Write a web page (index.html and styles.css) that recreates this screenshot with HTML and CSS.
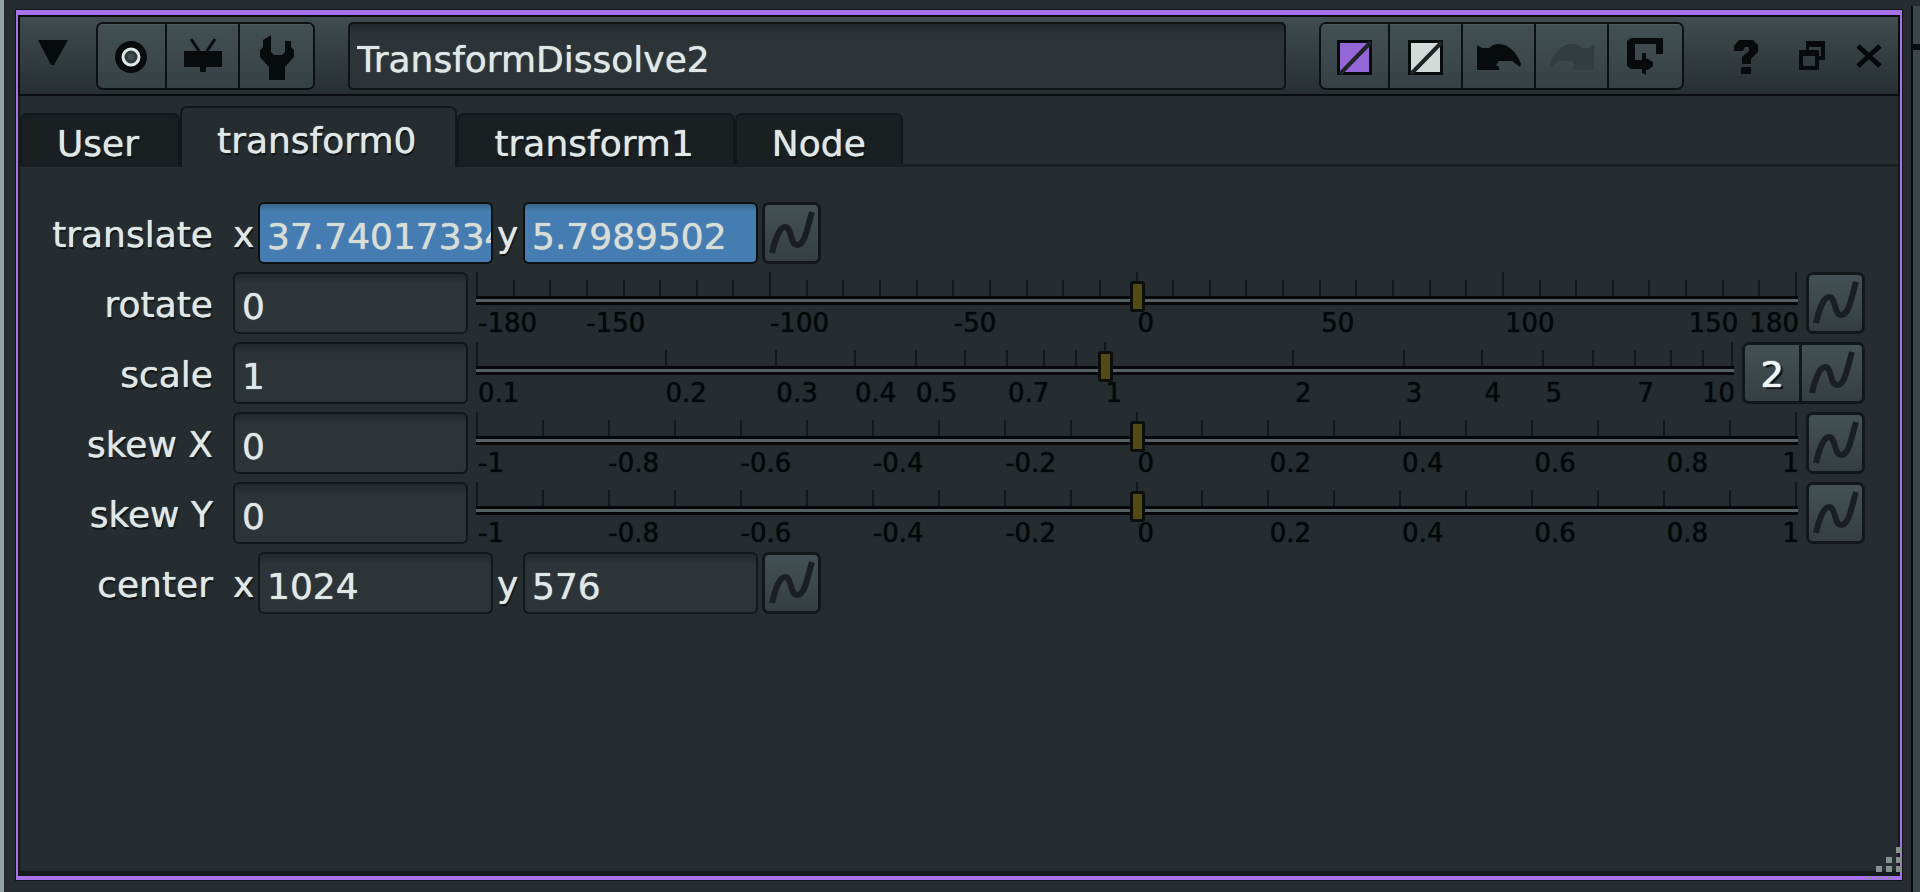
FILE: index.html
```html
<!DOCTYPE html>
<html lang="en">
<head>
    <meta charset="UTF-8">
    <meta name="viewport" content="width=device-width, initial-scale=1.0">
    <title>TransformDissolve2</title>
    <link rel="stylesheet" href="styles.css">
</head>
<body>
    <!-- Curve icon shared by all animation buttons -->
    <svg class="sprite" aria-hidden="true">
        <symbol id="curve" viewBox="0 0 46 52">
            <path d="M3 46 C5 36 10 20 16 20 C23 20 21 38 28 38 C36 38 38 22 43 5"/>
        </symbol>
    </svg>

    <main class="panel">
        <header class="header">
            <button class="collapse" aria-label="Collapse">
                <svg width="30" height="26" viewBox="0 0 30 26"><path d="M0 0 H30 L16 25 H13 Z"/></svg>
            </button>
            <div class="group">
                <button aria-label="Center node">
                    <svg width="34" height="34" viewBox="0 0 34 34">
                        <circle cx="16" cy="17" r="16"/>
                        <circle class="ring" cx="16" cy="17" r="8"/>
                        <circle class="pupil" cx="16" cy="17" r="3"/>
                    </svg>
                </button>
                <button aria-label="Show in viewer">
                    <svg width="40" height="48" viewBox="0 0 40 48">
                        <path d="M1 18 H39 V34 H23 V39 H17 V34 H1 Z"/>
                        <path class="stroke" d="M8 6 L16 18 M32 6 L24 18"/>
                    </svg>
                </button>
                <button aria-label="Knob settings">
                    <svg width="36" height="48" viewBox="0 0 36 48">
                        <path d="M9 4 L12 2 V19 L15 22 H23 L26 19 V8 H32 V14 L35 17 V24 L26 34 V47 H10 V34 L1 24 V17 L4 14 V7 Z"/>
                    </svg>
                </button>
            </div>
            <input class="node-name" type="text" value="TransformDissolve2" aria-label="Node name">
            <div class="group">
                <button aria-label="Node color">
                    <svg width="36" height="36" viewBox="0 0 36 36">
                        <rect x="0" y="1" width="35" height="35"/>
                        <rect class="purple" x="3" y="4" width="29" height="29"/>
                        <path class="slash" d="M3 35 L34 3"/>
                    </svg>
                </button>
                <button aria-label="Interface color">
                    <svg width="36" height="36" viewBox="0 0 36 36">
                        <rect x="0" y="1" width="35" height="35"/>
                        <rect class="white" x="3" y="4" width="29" height="29"/>
                        <path class="slash" d="M3 35 L34 3"/>
                    </svg>
                </button>
                <button aria-label="Undo">
                    <svg width="46" height="28" viewBox="0 0 46 28">
                        <path d="M1 2 L6 5 H13 Q17 1 23 1 C33 1 41 10 45 21 L44 24 L36 18 H23 L20 22 L23 24 V27 H1 Z"/>
                    </svg>
                </button>
                <button aria-label="Redo" disabled>
                    <svg width="46" height="28" viewBox="0 0 46 28">
                        <path d="M45 2 L40 5 H33 Q29 1 23 1 C13 1 5 10 1 21 L2 24 L10 18 H23 L26 22 L23 24 V27 H45 Z"/>
                    </svg>
                </button>
                <button aria-label="Revert">
                    <svg width="40" height="44" viewBox="0 0 40 44">
                        <path d="M5 3 H37 V19 H30 V9 H9 V25 H16 V18 H20 V23 L27 27 V31 L22 35 H20 V40 L16 38 V34 H5 L1 31 V6 Z"/>
                    </svg>
                </button>
            </div>
            <div class="window-buttons">
                <button aria-label="Help">
                    <svg width="26" height="40" viewBox="0 0 26 40">
                        <path d="M6 4 H20 L25 9 V16 L18 23 V28 H9 V21 L16 15 V11 H12 L10 15 H1 V10 Z M8 31 H18 V38 H8 Z"/>
                    </svg>
                </button>
                <button aria-label="Float window">
                    <svg width="36" height="36" viewBox="0 0 36 36">
                        <path d="M16 3 H35 V22 H29 V18 H31 V9 H19 V12 H16 Z"/>
                        <path fill-rule="evenodd" d="M9 12 H29 V32 H9 Z M13 18 V28 H25 V18 Z"/>
                    </svg>
                </button>
                <button aria-label="Close">
                    <svg width="28" height="28" viewBox="0 0 28 28">
                        <path class="cross" d="M2 4 L24 24 M24 4 L2 24"/>
                    </svg>
                </button>
            </div>
        </header>

        <div class="tabs" role="tablist">
            <button class="tab" role="tab">User</button>
            <button class="tab active" role="tab" aria-selected="true">transform0</button>
            <button class="tab" role="tab">transform1</button>
            <button class="tab" role="tab">Node</button>
        </div>

        <section class="knobs">
            <div class="row">
                <span class="name">translate</span>
                <label class="axis" for="translateX">x</label>
                <input class="field animated" type="text" id="translateX" value="37.74017334">
                <label class="axis axis-y" for="translateY">y</label>
                <input class="field animated" type="text" id="translateY" value="5.7989502">
                <button class="curve" aria-label="Animation"><svg><use href="#curve"/></svg></button>
            </div>
            <div class="row">
                <label class="name" for="rotate">rotate</label>
                <input class="field" type="text" id="rotate" value="0">
                <div class="slider" data-scale="rotate">
                    <div class="ticks"></div>
                    <input type="range" min="-180" max="180" value="0" aria-label="rotate">
                    <div class="numbers"></div>
                </div>
                <button class="curve" aria-label="Animation"><svg><use href="#curve"/></svg></button>
            </div>
            <div class="row">
                <label class="name" for="scale">scale</label>
                <input class="field" type="text" id="scale" value="1">
                <div class="slider" data-scale="scale">
                    <div class="ticks"></div>
                    <input type="range" min="-1" max="1" step="0.01" value="0" aria-label="scale">
                    <div class="numbers"></div>
                </div>
                <div class="pair">
                    <button class="curve split">2</button>
                    <button class="curve" aria-label="Animation"><svg><use href="#curve"/></svg></button>
                </div>
            </div>
            <div class="row">
                <label class="name" for="skewX">skew X</label>
                <input class="field" type="text" id="skewX" value="0">
                <div class="slider" data-scale="skew">
                    <div class="ticks"></div>
                    <input type="range" min="-1" max="1" step="0.01" value="0" aria-label="skew X">
                    <div class="numbers"></div>
                </div>
                <button class="curve" aria-label="Animation"><svg><use href="#curve"/></svg></button>
            </div>
            <div class="row">
                <label class="name" for="skewY">skew Y</label>
                <input class="field" type="text" id="skewY" value="0">
                <div class="slider" data-scale="skew">
                    <div class="ticks"></div>
                    <input type="range" min="-1" max="1" step="0.01" value="0" aria-label="skew Y">
                    <div class="numbers"></div>
                </div>
                <button class="curve" aria-label="Animation"><svg><use href="#curve"/></svg></button>
            </div>
            <div class="row">
                <span class="name">center</span>
                <label class="axis" for="centerX">x</label>
                <input class="field" type="text" id="centerX" value="1024">
                <label class="axis axis-y" for="centerY">y</label>
                <input class="field" type="text" id="centerY" value="576">
                <button class="curve" aria-label="Animation"><svg><use href="#curve"/></svg></button>
            </div>
        </section>

        <svg class="grip" width="36" height="34" viewBox="0 0 36 34">
            <path d="M29 1h5v6h-5z M19 11h6v6h-6z M29 11h5v6h-5z M9 20h6v6h-6z M19 20h6v6h-6z M29 20h5v6h-5z M1 31h4v2h-4z M11 31h4v2h-4z M20 31h4v2h-4z"/>
        </svg>
    </main>
    <aside class="gutter"></aside>

    <script>
        const range = (from, to, step) => {
            const values = [];
            for (let i = 0; i <= Math.round((to - from) / step); i++) {
                values.push(Math.round((from + i * step) * 10) / 10);
            }
            return values;
        };

        const scales = {
            rotate: {
                ticks: range(-180, 180, 10),
                long: [-180, -100, 0, 100, 180],
                numbers: [-180, -150, -100, -50, 0, 50, 100, 150, 180],
                position: v => (v + 180) / 360
            },
            scale: {
                ticks: range(0.1, 1, 0.1).concat(range(2, 10, 1)),
                long: [0.1, 1, 10],
                numbers: [0.1, 0.2, 0.3, 0.4, 0.5, 0.7, 1, 2, 3, 4, 5, 7, 10],
                position: v => (Math.log10(v) + 1) / 2
            },
            skew: {
                ticks: range(-1, 1, 0.1),
                long: [-1, 0, 1],
                numbers: range(-1, 1, 0.2),
                position: v => (v + 1) / 2
            }
        };

        document.querySelectorAll('.slider').forEach(slider => {
            const scale = scales[slider.dataset.scale];
            const ticks = slider.querySelector('.ticks');
            const numbers = slider.querySelector('.numbers');

            scale.ticks.forEach(value => {
                const tick = document.createElement('i');
                tick.style.left = `${scale.position(value) * 100}%`;
                tick.classList.toggle('long', scale.long.includes(value));
                ticks.appendChild(tick);
            });

            // The last number is kept inside the end of the track
            scale.numbers.forEach((value, index) => {
                const number = document.createElement('span');
                number.textContent = value;
                if (index === scale.numbers.length - 1) {
                    number.style.right = '0';
                } else {
                    number.style.left = `${scale.position(value) * 100}%`;
                }
                numbers.appendChild(number);
            });
        });
    </script>
</body>
</html>
```
FILE: styles.css
```css
* {
    box-sizing: border-box;
}

body {
    margin: 0;
    min-height: 100vh;
    display: flex;
    background-color: #252d30;
    border-left: 4px solid #93a3a1;
    color: #dfe8e6;
    font-family: "DejaVu Sans", Verdana, sans-serif;
    font-size: 36px;
    line-height: 42px;
}

button,
input {
    margin: 0;
    padding: 0;
    border: 0;
    background: none;
    color: inherit;
    font: inherit;
    outline: none;
}

button {
    display: flex;
    align-items: center;
    justify-content: center;
}

svg {
    display: block;
    fill: #080b0c;
}

.sprite {
    position: absolute;
    width: 0;
    height: 0;
}

.panel {
    position: relative;
    flex: 1;
    min-width: 0;
    margin: 10px 9px 12px 12px;
    border: solid #a873ea;
    border-width: 5px 2px 4px;
    box-shadow: 0 0 0 1px #0f1415, inset 2px -5px 1px #141a1c, inset -2px 0 1px #141a1c;
}

.gutter {
    width: 9px;
    margin-top: 6px;
    border-left: 2px solid #0a0d0e;
    background: linear-gradient(#3b4749 38px, #0a0d0e 38px, #0a0d0e 44px, #3b4749 44px);
}

/* Header */

.header {
    display: flex;
    align-items: center;
    height: 81px;
    padding-right: 3px;
    border: 2px solid #0a0d0e;
    background: linear-gradient(#404c4f, #272f32);
}

.collapse {
    width: 65px;
    height: 68px;
    margin-right: 11px;
    padding-bottom: 6px;
}

.group {
    display: flex;
    height: 68px;
    border: 2px solid #0c1011;
    border-radius: 7px;
    overflow: hidden;
}

.group button {
    width: 73px;
    padding-top: 2px;
    background: linear-gradient(#435053, #364144);
    box-shadow: inset 0 1px #4c595b;
}

.group button:first-child {
    width: 67px;
}

.group button:last-child {
    width: 75px;
}

.group button + button {
    border-left: 2px solid #0c1011;
}

.group button:disabled svg {
    fill: #333d3f;
}

.ring {
    fill: #313b3d;
    stroke: #dfe8e6;
    stroke-width: 3;
}

.stroke {
    fill: none;
    stroke: #080b0c;
    stroke-width: 3;
}

.pupil {
    fill: #435053;
}

.purple {
    fill: #9566d8;
}

.white {
    fill: #d3dad8;
}

.slash {
    stroke: #1d2426;
    stroke-width: 4;
}

.cross {
    stroke: #050808;
    stroke-width: 5;
}

.node-name {
    flex: 1;
    min-width: 0;
    height: 68px;
    margin: 0 33px;
    padding: 8px 7px 0;
    border: 2px solid #0f1415;
    border-radius: 5px;
    background: linear-gradient(#21282b, #2c3437 10px);
    text-shadow: 0 0 1px #dfe8e6;
}

.window-buttons {
    display: flex;
    gap: 12px;
    padding-left: 37px;
}

.window-buttons button {
    width: 50px;
    height: 68px;
}

/* Tabs */

.tabs {
    display: flex;
    align-items: flex-end;
    height: 71px;
    margin: 0 2px;
    border-bottom: 3px solid #1a2022;
}

.tab {
    height: 51px;
    padding: 8px 39px 0 35px;
    border: 2px solid #12181a;
    border-bottom: 0;
    border-radius: 7px 7px 0 0;
    background-color: #1a2022;
    text-shadow: 0 0 1px #dfe8e6, 1px 2px 1px #0a0d0e;
}

.tab.active {
    height: 61px;
    margin-bottom: -3px;
    padding-top: 6px;
    background-color: #252d30;
}

.tab:last-child {
    padding-right: 35px;
}

/* Knobs */

.knobs {
    display: flex;
    flex-direction: column;
    gap: 8px;
    padding: 35px 35px 35px 0;
}

.row {
    display: flex;
    align-items: center;
    height: 62px;
}

.name {
    flex: none;
    width: 215px;
    padding-top: 4px;
    padding-right: 20px;
    text-align: right;
    text-shadow: 0 0 1px #dfe8e6, 1px 2px 1px #0a0d0e;
}

.axis {
    width: 25px;
    padding-top: 4px;
    text-shadow: 0 0 1px #dfe8e6, 1px 2px 1px #0a0d0e;
}

.axis-y {
    width: 30px;
    padding-left: 4px;
}

.field {
    width: 235px;
    height: 62px;
    padding: 6px 0 0 7px;
    border: 2px solid #12181a;
    border-radius: 6px;
    background: linear-gradient(#21282b, #2c3437 10px);
    text-shadow: 0 0 1px #dfe8e6;
}

.field.animated {
    border-color: #0c1011;
    background: linear-gradient(#3a658b, #457db3 8px);
    color: #d8ddd5;
}

.curve {
    flex: none;
    width: 59px;
    height: 62px;
    margin-left: 4px;
    border: 3px solid #12181a;
    border-radius: 7px;
    background: linear-gradient(#445154, #353f42);
}

.curve svg {
    width: 46px;
    height: 52px;
    fill: none;
    stroke: #1a1f23;
    stroke-width: 6;
}

.slider + .curve,
.pair {
    margin-left: 8px;
}

.pair {
    display: flex;
}

.pair .curve {
    width: 66px;
    margin-left: 0;
    border-radius: 0 7px 7px 0;
}

.pair .split {
    width: 57px;
    padding-top: 4px;
    border-right: 0;
    border-radius: 7px 0 0 7px;
    color: #eef5f4;
    text-shadow: 0 0 1px #eef5f4, 1px 0 1px #eef5f4, 3px 2px 1px #0a0d0e;
}

/* Sliders */

.slider {
    flex: 1;
    min-width: 0;
    height: 62px;
    margin-left: 8px;
}

.ticks {
    position: relative;
    height: 24px;
    margin: 0 3px 0 0;
}

.ticks i {
    position: absolute;
    bottom: 0;
    width: 2px;
    height: 16px;
    background-color: #13191b;
}

.ticks .long {
    height: 24px;
}

/* Positioned so that the handle is drawn over the ticks */
.slider input {
    position: relative;
    display: block;
    width: 100%;
    height: 9px;
    appearance: none;
    background: linear-gradient(#050708 3px, #566165 3px, #566165 6px, #050708 6px);
}

.slider input::-webkit-slider-thumb {
    appearance: none;
    width: 15px;
    height: 31px;
    margin-top: -9px;
    border: 3px solid #0c0e0b;
    border-radius: 3px;
    background-color: #544b14;
}

.numbers {
    position: relative;
    height: 26px;
    margin-top: 5px;
    margin-right: -1px;
    color: #050808;
    font-size: 26px;
    line-height: 26px;
    text-shadow: 0 0 1px #050808;
}

.numbers span {
    position: absolute;
    top: 0;
}

.numbers span:first-child {
    margin-left: 2px;
}

.grip {
    position: absolute;
    right: -3px;
    bottom: -4px;
    fill: #87918f;
}
```
